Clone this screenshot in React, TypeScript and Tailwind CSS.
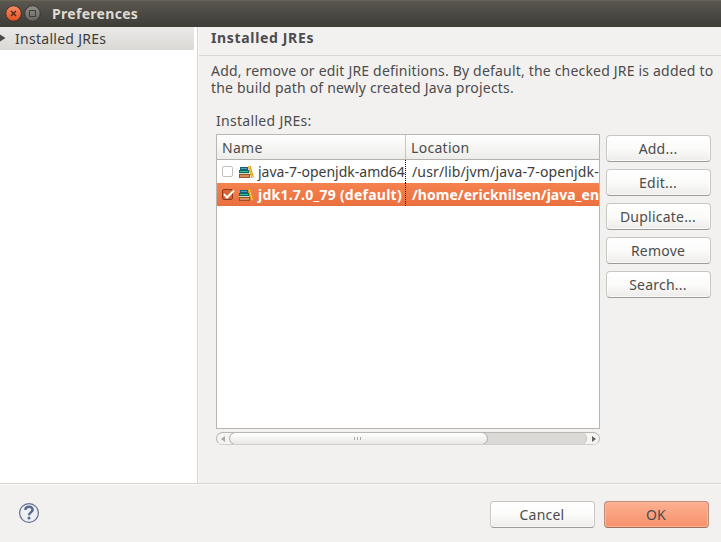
import React from "react";

function BooksIcon() {
  return (
    <svg width="16" height="14" viewBox="0 0 16 14" className="shrink-0">
      <g shapeRendering="crispEdges">
        <path d="M2 2h8v3H2z" fill="#125f86" />
        <path d="M3 3h6v1H3z" fill="#4aa3b8" />
        <path d="M1 5h10v3H1z" fill="#08705a" />
        <path d="M2 6h8v1H2z" fill="#3fb795" />
        <path d="M1 8h10v1H1z" fill="#c9dcd2" />
        <path d="M1 9h11v4H1z" fill="#9c5227" />
        <path d="M2 10h9v2H2z" fill="#cf8f5f" />
      </g>
      <path d="M11.200 1 14.500 12.500" stroke="#dd9a17" strokeWidth="2.800" />
      <path d="M11.300 1.500 14.300 12" stroke="#ffd868" strokeWidth="1.200" strokeDasharray="2 1" />
    </svg>
  );
}

function Btn({ label, primary = false }: { label: string; primary?: boolean }) {
  const look = primary
    ? "border-[#b98e7b] border-b-[#a06f5a] bg-linear-to-b from-[#fdb090] to-[#f6906a] shadow-[inset_0_0_0_1px_#fdb397]"
    : "border-[#c9c7c4] border-b-[#9d9b98] bg-linear-to-b from-white via-[#fbfbfa] to-[#edecea] shadow-[inset_0_0_0_1px_#ffffffb0]";
  return (
    <button className={`flex h-[27px] w-[105px] shrink-0 items-center justify-center rounded-[4px] border pr-px ${look}`}>
      <span className="tracking-[0.22px] whitespace-nowrap">{label}</span>
    </button>
  );
}

export default function App() {
  return (
    <div className="flex h-[542px] w-[721px] flex-col overflow-hidden bg-[#f2f1f0] font-['Noto_Sans','Open_Sans',sans-serif] text-[14px] leading-[17px] text-[#4c4c4c]">
      <header className="flex h-[27px] shrink-0 items-center border-t border-[#666358] bg-linear-to-b from-[#5a574f] to-[#3d3c37] pl-[5px]">
        <svg width="36" height="18" viewBox="0 0 36 18">
          <defs>
            <linearGradient id="close" x2="0" y2="1">
              <stop stopColor="#f58d67" />
              <stop offset="1" stopColor="#e4501d" />
            </linearGradient>
            <linearGradient id="max" x2="0" y2="1">
              <stop stopColor="#92908a" />
              <stop offset="1" stopColor="#65635c" />
            </linearGradient>
          </defs>
          <circle cx="8.500" cy="8.500" r="7.800" fill="url(#close)" stroke="#37332d" />
          <path d="m6 6 5 5m0-5-5 5" stroke="#4b2a1c" strokeWidth="1.400" />
          <circle cx="27.500" cy="8.500" r="7.800" fill="url(#max)" stroke="#37352f" />
          <path d="M24.500 5.500h6v6h-6z" fill="none" stroke="#3d3c37" />
        </svg>
        <h1 className="-mt-[2px] ml-[11px] font-bold tracking-[0.3px] text-[#dfdbd2]">Preferences</h1>
      </header>

      <main className="flex h-[456px] shrink-0">
        <aside className="w-[198px] shrink-0 border-r border-[#d9d7d5] bg-white">
          <div className="flex h-[23px] w-[194px] items-center bg-linear-to-b from-[#ebeae8] to-[#dad9d6] text-[#3c3c3c]">
            <svg width="6" height="8" viewBox="0 0 6 8" className="-mt-[2px]">
              <path d="M0 .5v7L5.500 4z" fill="#4a4a48" />
            </svg>
            <span className="ml-[9px] tracking-[0.28px]">Installed JREs</span>
          </div>
        </aside>
        <section className="flex min-w-0 flex-1 flex-col border-l border-[#f8f7f6]">
          <div className="flex h-[29px] shrink-0 items-start border-b border-[#dad8d6] pt-[2px] pl-3">
            <h2 className="font-bold tracking-[0.66px]">Installed JREs</h2>
          </div>
          <p className="mt-[6px] ml-3 w-[508px] tracking-[0.19px]">
            Add, remove or edit JRE definitions. By default, the checked JRE is added to the build path of newly created Java projects.
          </p>
          <div className="mt-4 ml-[17px] tracking-[0.3px]">Installed JREs:</div>
          <div className="mt-[5px] ml-[17px] flex gap-[6px]">
            <div className="w-[384px]">
              <div className="flex h-[295px] flex-col border border-[#b9b6b2] bg-white">
                <div className="flex h-[25px] shrink-0 border-b border-[#b4b1ad] bg-linear-to-b from-white to-[#ececea] tracking-[0.3px]">
                  <div className="flex w-[189px] items-center border-r border-[#c9c7c4] pl-[5px]">Name</div>
                  <div className="flex items-center pl-[5px]">Location</div>
                </div>
                <div className="flex h-[23px] text-[#3c3c3c]">
                  <div className="flex w-[189px] shrink-0 items-center overflow-hidden border-r border-dotted border-black pl-[5px] whitespace-nowrap">
                    <span className="h-[11px] w-[11px] shrink-0 rounded-[2px] border border-[#c1bfbc] bg-white" />
                    <span className="ml-[5px]"><BooksIcon /></span>
                    <span className="ml-[4px]">java-7-openjdk-amd64</span>
                  </div>
                  <div className="flex min-w-0 flex-1 items-center overflow-hidden pl-[6px] tracking-[0.14px] whitespace-nowrap">/usr/lib/jvm/java-7-openjdk-</div>
                </div>
                <div className="flex h-[23px] bg-linear-to-b from-[#f4824f] to-[#eb6f3e] font-bold text-white">
                  <div className="flex w-[189px] shrink-0 items-center overflow-hidden border-r border-dotted border-black pl-[5px] whitespace-nowrap">
                    <svg width="13" height="12" viewBox="0 0 13 12" className="-mr-[2px] shrink-0">
                      <rect x=".5" y=".5" width="10" height="10" rx="1.500" fill="#d96535" stroke="#873c1d" />
                      <path d="m2 5 3 3.500 7-7" fill="none" stroke="white" strokeWidth="1.900" />
                    </svg>
                    <span className="ml-[5px]"><BooksIcon /></span>
                    <span className="ml-[4px] tracking-[0.24px]">jdk1.7.0_79 (default)</span>
                  </div>
                  <div className="flex min-w-0 flex-1 items-center overflow-hidden pl-[6px] tracking-[0.04px] whitespace-nowrap">/home/ericknilsen/java_en</div>
                </div>
              </div>
              <div className="mt-[3px] flex h-[13px] overflow-hidden rounded-full border border-[#b9b7b3] border-b-[#d2d0ce] bg-[#f5f4f3]">
                <div className="flex w-[12px] shrink-0 items-center justify-end pr-[4px]">
                  <svg width="4" height="6" viewBox="0 0 4 6"><path d="M4 0v6L0 3z" fill="#a8a6a3" /></svg>
                </div>
                <div className="-my-px flex flex-1 rounded-r-full border-r border-[#c4c2bf] bg-linear-to-r from-[#f5f4f3] from-5% via-[#dad9d6] via-10% to-[#dad9d6]">
                  <div className="flex h-[13px] w-[259px] items-center justify-center gap-[2px] rounded-full border border-[#aeaba7] bg-linear-to-b from-white to-[#e9e8e6] pr-[3px]">
                    <i className="h-[3px] w-px bg-[#aaa8a5]" />
                    <i className="h-[3px] w-px bg-[#aaa8a5]" />
                    <i className="h-[3px] w-px bg-[#aaa8a5]" />
                  </div>
                </div>
                <div className="flex w-[12px] items-center pl-[5px]">
                  <svg width="4" height="6" viewBox="0 0 4 6"><path d="M0 0v6l4-3z" fill="#64625f" /></svg>
                </div>
              </div>
            </div>
            <div className="mt-px flex flex-col gap-[7px]">
              <Btn label="Add..." />
              <Btn label="Edit..." />
              <Btn label="Duplicate..." />
              <Btn label="Remove" />
              <Btn label="Search..." />
            </div>
          </div>
        </section>
      </main>

      <footer className="flex min-h-0 flex-1 items-start border-t border-[#d8d6d4] pt-[17px] pl-[18px] shadow-[inset_0_1px_#faf9f8]">
        <svg width="22" height="22" viewBox="0 0 22 22" className="mt-px">
          <circle cx="11" cy="11" r="9.400" fill="#eeeff1" stroke="#60708c" strokeWidth="1.200" />
          <path d="M7.300 7.800C7.800 3.600 15 3.800 14.600 8c-.3 2.400-3.600 2.500-3.600 5.300" fill="none" stroke="#566990" strokeWidth="2.500" />
          <circle cx="11" cy="16" r="1.500" fill="#566990" />
        </svg>
        <div className="ml-[450px] flex gap-[9px]">
          <Btn label="Cancel" />
          <Btn label="OK" primary />
        </div>
      </footer>
    </div>
  );
}
